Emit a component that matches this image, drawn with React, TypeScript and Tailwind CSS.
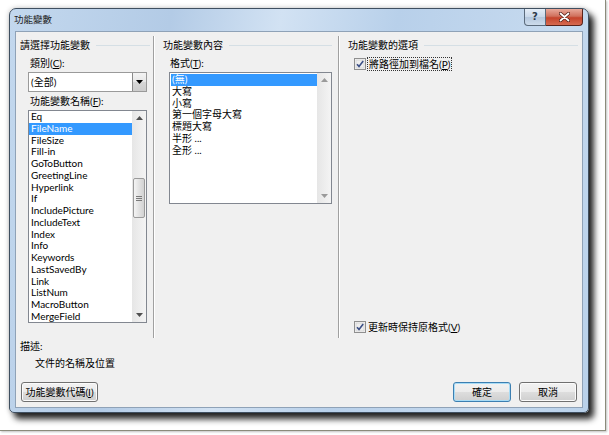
import React from "react";

const names = [
  "Eq",
  "FileName",
  "FileSize",
  "Fill-in",
  "GoToButton",
  "GreetingLine",
  "Hyperlink",
  "If",
  "IncludePicture",
  "IncludeText",
  "Index",
  "Info",
  "Keywords",
  "LastSavedBy",
  "Link",
  "ListNum",
  "MacroButton",
  "MergeField",
];

const formats = ["(無)", "大寫", "小寫", "第一個字母大寫", "標題大寫", "半形 ...", "全形 ..."];

const Arrow = ({ down, color }: { down?: boolean; color: string }) => (
  <svg width="7" height="4" viewBox="0 0 7 4">
    <path d={down ? "M0 0h7L3.5 4z" : "M0 4h7L3.5 0z"} fill={color} />
  </svg>
);

const ScrollBar = ({ thumb, color }: { thumb?: boolean; color: string }) => (
  <div className="w-[14px] h-full flex flex-col bg-[linear-gradient(90deg,#e6e6e6,#f4f4f4)]">
    <div className="h-[14px] flex items-center justify-center">
      <Arrow color={color} />
    </div>
    <div className="flex-1 px-[1px]">
      {thumb && (
        <div className="mt-[53px] h-[40px] rounded-[2px] border border-[#9a9a9a] bg-[linear-gradient(90deg,#f4f4f4,#e2e2e2_50%,#d2d2d2)] flex flex-col items-center justify-center gap-[1px]">
          <div className="w-[6px] h-px bg-[#7a7a7a]" />
          <div className="w-[6px] h-px bg-[#7a7a7a]" />
          <div className="w-[6px] h-px bg-[#7a7a7a]" />
        </div>
      )}
    </div>
    <div className="h-[14px] flex items-center justify-center">
      <Arrow down color={color} />
    </div>
  </div>
);

const GroupHeader = ({ title, right }: { title: string; right: string }) => (
  <div className={`mt-[3px] h-[12px] flex items-center leading-[12px] ${right}`}>
    <span className="whitespace-nowrap">{title}</span>
    <div className="flex-1 ml-[6px] h-px bg-[#d5dfe5]" />
  </div>
);

const Check = () => (
  <svg width="12" height="12" viewBox="0 0 12 12">
    <rect x="0.5" y="0.5" width="11" height="11" fill="#f6f6f6" stroke="#8f8f8f" />
    <rect x="2" y="2" width="8" height="8" fill="#eeeeee" stroke="#d2d2d2" strokeWidth="0.8" />
    <path d="M3 6.2l2 2.2L9.2 3" fill="none" stroke="#3b4f86" strokeWidth="1.6" />
  </svg>
);

const Button = ({ children, w, primary }: { children: React.ReactNode; w: string; primary?: boolean }) => (
  <div
    className={`${w} h-[20px] rounded-[3px] border ${
      primary ? "border-[#3c7fb1] shadow-[inset_0_0_0_1px_#a8dcf6]" : "border-[#707070] shadow-[inset_0_0_0_1px_#fbfbfb]"
    } bg-[linear-gradient(180deg,#f2f2f2_0%,#ebebeb_50%,#dddddd_51%,#cfcfcf_100%)] flex items-center justify-center leading-none`}
  >
    {children}
  </div>
);

export default function App() {
  return (
    <div className="w-[609px] h-[435px] bg-white font-['Lato','Noto_Sans_CJK_TC',sans-serif] text-[10px] text-black overflow-hidden">
      <div className="w-[606px] h-[431px] border-r border-b border-[#8b8b7b] pl-[9px] pt-[8px] shadow-[1px_1px_2px_rgba(0,0,0,0.25)]">
        <div className="w-[580px] h-[405px] rounded-t-[7px] rounded-b-[5px] border border-[#3f4f60] bg-[linear-gradient(100deg,#c3d8ee_0%,#b3cbe6_25%,#d2e2f3_42%,#b8d0ea_60%,#c6daef_85%,#b9d1ea_100%)] shadow-[5px_6px_6px_rgba(0,0,0,0.85),0_0_5px_rgba(0,0,0,0.25)] flex flex-col px-[5px] pb-[4px]">
          {/* title bar */}
          <div className="h-[22px] flex items-start justify-between -ml-[1px]">
            <span className="mt-[5px] text-[9.5px] leading-[12px] text-[#1e1e1e]">功能變數</span>
            <div className="flex h-[17px]">
              <div className="w-[22px] rounded-bl-[4px] border border-t-0 border-[#5b6b7c] bg-[linear-gradient(180deg,#e4edf7,#c9d8e9_50%,#b4c7dd_51%,#cddcec)] flex items-center justify-center">
                <span className="text-[10px] font-bold leading-none text-[#2d3a4a] font-['DejaVu_Sans',sans-serif]">?</span>
              </div>
              <div className="w-[37px] rounded-br-[4px] border border-t-0 border-l-0 border-[#5a231b] bg-[linear-gradient(180deg,#e9a99a,#d0715d_45%,#c5442c_55%,#d66a50)] flex items-center justify-center">
                <svg width="11" height="10" viewBox="0 0 11 10">
                  <path d="M1.5 1.5l8 7M9.5 1.5l-8 7" stroke="#4a1a12" strokeWidth="3.2" strokeLinecap="round" />
                  <path d="M1.5 1.5l8 7M9.5 1.5l-8 7" stroke="#ffffff" strokeWidth="1.8" strokeLinecap="round" />
                </svg>
              </div>
            </div>
          </div>

          {/* client area */}
          <div className="flex-1 border border-[#8fa2b7] bg-[#f0f0f0] flex flex-col">
            <div className="mt-[4px] h-[302px] flex">
              {/* column 1 */}
              <div className="w-[137px] pl-[4px] flex flex-col">
                <GroupHeader title="請選擇功能變數" right="mr-[3px]" />
                <div className="mt-[6px] ml-[10px] leading-[12px]">
                  類別(<u>C</u>):
                </div>
                <div className="mt-[3px] ml-[8px] w-[119px] h-[20px] border border-[#9a9a9a] bg-white flex">
                  <span className="flex-1 pl-[2px] leading-[18px]">(全部)</span>
                  <div className="w-[14px] border-l border-[#8a8a8a] bg-[linear-gradient(180deg,#f4f4f4,#e6e6e6_50%,#d7d7d7_51%,#cdcdcd)] flex items-center justify-center">
                    <Arrow down color="#000000" />
                  </div>
                </div>
                <div className="mt-[3px] ml-[10px] leading-[12px]">
                  功能變數名稱(<u>F</u>):
                </div>
                <div className="mt-[3px] ml-[8px] w-[119px] h-[213px] border border-[#828790] bg-white flex overflow-hidden">
                  <div className="flex-1 flex flex-col">
                    {names.map((n, i) => (
                      <div
                        key={n}
                        className={`h-[11.75px] shrink-0 pl-[2px] leading-[11.75px] whitespace-nowrap ${
                          i === 1 ? "bg-[#3399ff] text-white" : ""
                        }`}
                      >
                        {n}
                      </div>
                    ))}
                  </div>
                  <ScrollBar thumb color="#505050" />
                </div>
              </div>

              <div className="w-[2px] border-l border-r border-l-[#a0a0a0] border-r-white" />

              {/* column 2 */}
              <div className="w-[183px] pl-[8px] flex flex-col">
                <GroupHeader title="功能變數內容" right="mr-[6px]" />
                <div className="mt-[6px] ml-[7px] leading-[12px]">
                  格式(<u>T</u>):
                </div>
                <div className="mt-[3px] ml-[6px] w-[163px] h-[132px] border border-[#828790] bg-white flex overflow-hidden">
                  <div className="flex-1 flex flex-col pt-[1px] pl-[1px]">
                    {formats.map((f, i) => (
                      <div
                        key={f}
                        className={`h-[11.75px] shrink-0 pl-[1px] leading-[11.75px] whitespace-nowrap ${
                          i === 0 ? "bg-[#3399ff] text-white" : ""
                        }`}
                      >
                        {f}
                      </div>
                    ))}
                  </div>
                  <ScrollBar color="#9a9a9a" />
                </div>
              </div>

              <div className="w-[2px] border-l border-r border-l-[#a0a0a0] border-r-white" />

              {/* column 3 */}
              <div className="flex-1 pl-[8px] flex flex-col">
                <GroupHeader title="功能變數的選項" right="mr-[4px]" />
                <div className="mt-[6px] ml-[6px] h-[14px] flex items-center">
                  <Check />
                  <span className="ml-[1px] px-[1px] h-[14px] border border-dotted border-[#333] leading-[12px]">
                    將路徑加到檔名(<u>P</u>)
                  </span>
                </div>
                <div className="flex-1" />
                <div className="mb-[5px] ml-[6px] h-[12px] flex items-center">
                  <Check />
                  <span className="ml-[2px] leading-[12px]">
                    更新時保持原格式(<u>V</u>)
                  </span>
                </div>
              </div>
            </div>

            <div className="mt-[2px] ml-[4px] leading-[12px]">描述:</div>
            <div className="mt-[5px] ml-[19px] leading-[12px]">文件的名稱及位置</div>

            <div className="mt-[13px] mx-[5px] flex items-center">
              <Button w="w-[77px]">
                功能變數代碼(<u>I</u>)
              </Button>
              <div className="flex-1" />
              <Button w="w-[58px]" primary>
                確定
              </Button>
              <div className="w-[8px]" />
              <Button w="w-[58px]">取消</Button>
            </div>
          </div>
        </div>
      </div>
    </div>
  );
}
